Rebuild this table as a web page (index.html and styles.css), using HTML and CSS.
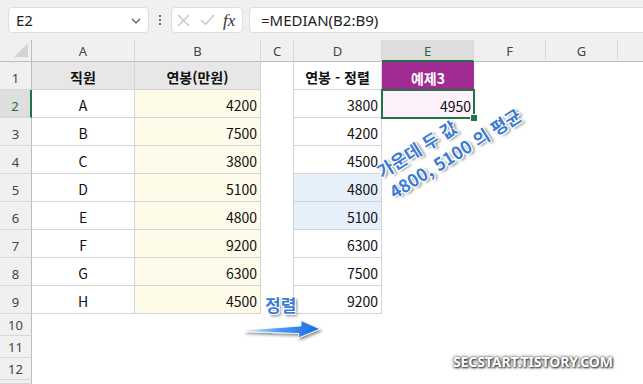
FILE: index.html
```html
<!DOCTYPE html>
<html lang="ko">
<head>
<meta charset="utf-8">
<link rel="stylesheet" href="styles.css">
</head>
<body>
<div class="app">
  <div class="topbar">
    <div class="namebox"><span>E2</span>
      <svg class="chev" width="10" height="6" viewBox="0 0 10 6"><path d="M1 1 L5 5 L9 1" fill="none" stroke="#555" stroke-width="1.2"/></svg>
    </div>
    <div class="dots"><i></i><i></i><i></i></div>
    <div class="fxbox">
      <svg width="13" height="13" viewBox="0 0 13 13"><path d="M1 1 L12 12 M12 1 L1 12" stroke="#c2c2c2" stroke-width="1.2" fill="none"/></svg>
      <svg width="15" height="12" viewBox="0 0 15 12"><path d="M1 6 L5.5 10.5 L14 1" stroke="#c2c2c2" stroke-width="1.2" fill="none"/></svg>
      <span class="fx">fx</span>
    </div>
    <div class="formula">=MEDIAN(B2:B9)</div>
  </div>

  <div class="sheet">
    <!-- header row -->
    <div class="corner"><svg width="14" height="14" viewBox="0 0 14 14"><polygon points="14,0 14,14 0,14" fill="#d4d4d4"/></svg></div>
    <div class="ch">A</div><div class="ch">B</div><div class="ch">C</div><div class="ch">D</div>
    <div class="ch sel">E</div><div class="ch">F</div><div class="ch">G</div><div class="ch last"></div>

    <!-- row 1 -->
    <div class="rh">1</div>
    <div class="c b hd ctr">직원</div>
    <div class="c b hd ctr">연봉(만원)</div>
    <div class="c gap"></div>
    <div class="c b bold ctr">연봉 - 정렬</div>
    <div class="c purple ctr">예제3</div>
    <div class="c"></div><div class="c"></div><div class="c"></div>

    <!-- row 2 -->
    <div class="rh selr">2</div>
    <div class="c b ctr">A</div>
    <div class="c b yel num">4200</div>
    <div class="c gap"></div>
    <div class="c b num">3800</div>
    <div class="c pink num active">4950</div>
    <div class="c"></div><div class="c"></div><div class="c"></div>

    <!-- row 3 -->
    <div class="rh">3</div>
    <div class="c b ctr">B</div>
    <div class="c b yel num">7500</div>
    <div class="c gap"></div>
    <div class="c b num">4200</div>
    <div class="c"></div><div class="c"></div><div class="c"></div><div class="c"></div>

    <!-- row 4 -->
    <div class="rh">4</div>
    <div class="c b ctr">C</div>
    <div class="c b yel num">3800</div>
    <div class="c gap"></div>
    <div class="c b num">4500</div>
    <div class="c"></div><div class="c"></div><div class="c"></div><div class="c"></div>

    <!-- row 5 -->
    <div class="rh">5</div>
    <div class="c b ctr">D</div>
    <div class="c b yel num">5100</div>
    <div class="c gap"></div>
    <div class="c b blue num">4800</div>
    <div class="c"></div><div class="c"></div><div class="c"></div><div class="c"></div>

    <!-- row 6 -->
    <div class="rh">6</div>
    <div class="c b ctr">E</div>
    <div class="c b yel num">4800</div>
    <div class="c gap"></div>
    <div class="c b blue num">5100</div>
    <div class="c"></div><div class="c"></div><div class="c"></div><div class="c"></div>

    <!-- row 7 -->
    <div class="rh">7</div>
    <div class="c b ctr">F</div>
    <div class="c b yel num">9200</div>
    <div class="c gap"></div>
    <div class="c b num">6300</div>
    <div class="c"></div><div class="c"></div><div class="c"></div><div class="c"></div>

    <!-- row 8 -->
    <div class="rh">8</div>
    <div class="c b ctr">G</div>
    <div class="c b yel num">6300</div>
    <div class="c gap"></div>
    <div class="c b num">7500</div>
    <div class="c"></div><div class="c"></div><div class="c"></div><div class="c"></div>

    <!-- row 9 -->
    <div class="rh">9</div>
    <div class="c b ctr">H</div>
    <div class="c b yel num">4500</div>
    <div class="c gap"></div>
    <div class="c b num">9200</div>
    <div class="c"></div><div class="c"></div><div class="c"></div><div class="c"></div>

    <!-- row 10-13 -->
    <div class="rh sm">10</div><div class="c wide"></div>
    <div class="rh sm">11</div><div class="c wide"></div>
    <div class="rh sm">12</div><div class="c wide"></div>
    <div class="rh sm"></div><div class="c wide"></div>
  </div>

  <div class="note">가운데 두 값<br>4800, 5100 의 평균</div>
  <div class="sortlabel">정렬</div>
  <svg class="arrow" width="90" height="32" viewBox="0 0 90 32">
    <defs>
      <linearGradient id="ag" x1="0" y1="0" x2="1" y2="0">
        <stop offset="0" stop-color="#d8e9ff"/>
        <stop offset="0.45" stop-color="#4b9bf7"/>
        <stop offset="1" stop-color="#1769e0"/>
      </linearGradient>
      <filter id="sh" x="-20%" y="-50%" width="140%" height="200%">
        <feDropShadow dx="1.5" dy="2" stdDeviation="1.5" flood-color="#000" flood-opacity="0.45"/>
      </filter>
    </defs>
    <polygon points="5,14 61,10 61,4.5 80,13 58,22 59,17.5 5,15.5" fill="url(#ag)" stroke="#fff" stroke-width="0.8" filter="url(#sh)"/>
  </svg>
  <div class="watermark">SECSTART.TISTORY.COM</div>
</div>
</body>
</html>
```

FILE: styles.css
```css
* { box-sizing: border-box; }
html, body { margin: 0; padding: 0; }
body {
  width: 643px;
  height: 384px;
  overflow: hidden;
  background: #fff;
  font-family: "Noto Sans CJK KR", "Noto Sans", sans-serif;
}
.app { position: relative; width: 643px; height: 384px; overflow: hidden; }

/* formula bar */
.topbar {
  height: 40px;
  background: #f0f0f0;
  display: flex;
  align-items: center;
  padding-left: 8px;
}
.namebox {
  width: 141px;
  height: 26px;
  background: #fff;
  border: 1px solid #dedede;
  border-radius: 4px;
  display: flex;
  align-items: center;
  justify-content: space-between;
  padding: 0 7px 0 7px;
  font-family: "Noto Sans", sans-serif;
  font-size: 15px;
  color: #222;
}
.namebox .chev { margin-top: 1px; }
.dots {
  width: 22px;
  display: flex;
  flex-direction: column;
  align-items: center;
  gap: 2px;
}
.dots i { display: block; width: 2px; height: 2px; background: #444; border-radius: 1px; }
.fxbox {
  width: 72px;
  height: 26px;
  background: #fff;
  border: 1px solid #dedede;
  border-radius: 4px;
  display: flex;
  align-items: center;
  padding-left: 5px;
  gap: 10px;
}
.fxbox .fx {
  font-family: "Liberation Serif", "DejaVu Serif", serif;
  font-style: italic;
  font-size: 17px;
  color: #333;
  margin-left: -2px;
  line-height: 1;
}
.formula {
  flex: 1;
  margin-left: 6px;
  height: 26px;
  background: #fff;
  border: 1px solid #dedede;
  border-right: none;
  border-radius: 4px 0 0 4px;
  display: flex;
  align-items: center;
  padding-left: 11px;
  font-family: "Noto Sans", sans-serif;
  font-size: 15px;
  color: #222;
}

/* sheet grid */
.sheet {
  display: grid;
  grid-template-columns: 32px 103px 126px 33px 88px 92px 72px 72px 1fr;
  grid-template-rows: 22px repeat(9, 28px) repeat(3, 22px) 1fr;
  height: 344px;
  font-size: 14px;
  color: #111;
}
.corner {
  background: #f0f0f0;
  border-right: 1px solid #bdbdbd;
  border-bottom: 1px solid #bdbdbd;
  display: flex;
  align-items: flex-end;
  justify-content: flex-end;
  padding: 0 3px 4px 0;
}
.ch {
  background: #f0f0f0;
  border-right: 1px solid #d8d8d8;
  border-bottom: 1px solid #bdbdbd;
  display: flex;
  align-items: center;
  justify-content: center;
  font-family: "Noto Sans", sans-serif;
  font-size: 13px;
  color: #444;
  padding-top: 1px;
}
.ch.last { border-right: none; }
.ch.sel {
  background: #dedede;
  color: #1e6e3e;
  border-bottom: 2px solid #217346;
}
.rh {
  background: #f0f0f0;
  border-right: 1px solid #bdbdbd;
  border-bottom: 1px solid #d8d8d8;
  display: flex;
  align-items: flex-end;
  justify-content: center;
  font-family: "Noto Sans", sans-serif;
  font-size: 13px;
  line-height: 18px;
  color: #444;
  padding-bottom: 2px;
}
.rh.sm { padding-bottom: 1px; }
.rh.selr {
  background: #dedede;
  color: #1e6e3e;
  border-right: 2px solid #217346;
}
.c {
  display: flex;
  align-items: flex-end;
  line-height: 18px;
  padding: 0 3px 3px;
  white-space: nowrap;
}
.c.wide { grid-column: 2 / -1; }
.c.b {
  border-right: 1px solid #d4d4d4;
  border-bottom: 1px solid #d4d4d4;
}
.c.gap { border-right: 1px solid #d4d4d4; }
.ctr { justify-content: center; }
.num { justify-content: flex-end; }
.hd { background: #e7e7e7; font-weight: 700; }
.bold { font-weight: 700; }
.yel { background: #fefce8; }
.blue { background: #e6f0fb; }
.pink { background: #fdf1fb; }
.purple { background: #a02b93; color: #fff; font-weight: 700; }
.active {
  position: relative;
  outline: 2px solid #217346;
  outline-offset: -1px;
}
.active::after {
  content: "";
  position: absolute;
  right: -4px;
  bottom: -4px;
  width: 6px;
  height: 6px;
  background: #217346;
  border: 1px solid #fff;
}

/* annotations */
.note {
  position: absolute;
  left: 372px;
  top: 163px;
  transform-origin: 0 0;
  transform: rotate(-32deg);
  font-size: 17.5px;
  font-weight: 700;
  line-height: 24px;
  color: #3a7bd5;
  white-space: nowrap;
  text-shadow: -1px -1px 0 #fff, 1px -1px 0 #fff, -1px 1px 0 #fff, 1px 1px 0 #fff,
    0 -1px 0 #fff, 0 1px 0 #fff, -1px 0 0 #fff, 1px 0 0 #fff,
    2px 2px 3px rgba(0,0,0,0.6);
}
.sortlabel {
  position: absolute;
  left: 265px;
  top: 295px;
  font-size: 17px;
  font-weight: 700;
  line-height: 20px;
  color: #3a7bd5;
  text-shadow: -1px -1px 0 #fff, 1px -1px 0 #fff, -1px 1px 0 #fff, 1px 1px 0 #fff,
    0 -1px 0 #fff, 0 1px 0 #fff, -1px 0 0 #fff, 1px 0 0 #fff,
    2px 2px 3px rgba(0,0,0,0.6);
}
.arrow {
  position: absolute;
  left: 240px;
  top: 316px;
}
.watermark {
  position: absolute;
  left: 453px;
  top: 352px;
  font-family: "Noto Sans", sans-serif;
  font-size: 14px;
  font-weight: 700;
  letter-spacing: -0.1px;
  color: #fff;
  text-shadow: 0 0 2px #444, 1px 1px 2px #333, 0 0 4px rgba(0,0,0,0.5);
}
```
